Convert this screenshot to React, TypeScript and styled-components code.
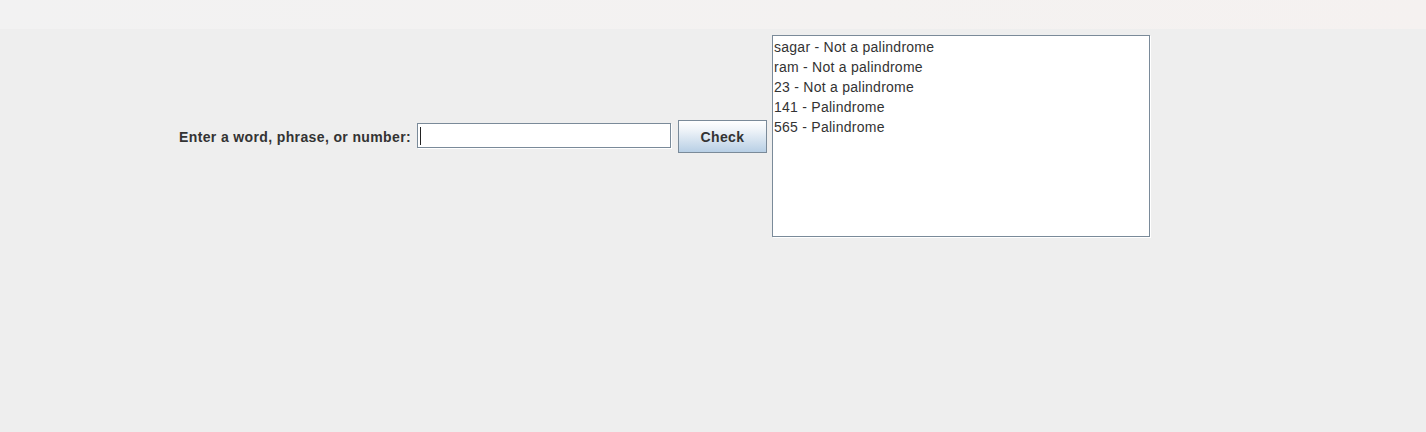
import React from "react";
import styled, { createGlobalStyle } from "styled-components";

const GlobalStyle = createGlobalStyle`
  html, body {
    margin: 0;
    padding: 0;
    background: #eeeeee;
    font-family: "Liberation Sans", Arial, sans-serif;
  }
`;

const Window = styled.div`
  width: 1426px;
  height: 432px;
  display: flex;
  flex-direction: column;
  background: #eeeeee;
`;

const TitleBar = styled.div`
  height: 29px;
  background: linear-gradient(to right, #f2f2f2, #f4f2f1 60%, #f5f1f0);
`;

const Content = styled.div`
  display: flex;
  align-items: center;
  padding: 5px 0 0 179px;
  height: 203px;
`;

const Label = styled.label`
  font-size: 14px;
  font-weight: bold;
  letter-spacing: 0.37px;
  color: #333333;
  margin-right: 6px;
  padding-top: 2px;
  white-space: nowrap;
`;

const Field = styled.div`
  width: 250px;
  height: 23px;
  border: 1px solid #7a8a99;
  box-shadow: 1px 1px 0 #ffffff;
  background: #ffffff;
  margin-right: 7px;
  display: flex;
  align-items: center;
  padding-left: 2px;
  box-sizing: content-box;
`;

const Caret = styled.span`
  width: 1px;
  height: 18px;
  background: #222222;
`;

const Button = styled.button`
  box-sizing: border-box;
  width: 89px;
  height: 33px;
  border: 1px solid #7a8a99;
  background: linear-gradient(to bottom, #ffffff 0%, #eef3f8 30%, #b8cfe5 100%);
  font-family: "Liberation Sans", Arial, sans-serif;
  font-size: 14px;
  font-weight: bold;
  letter-spacing: 0.35px;
  color: #333333;
  padding: 2px 0 0;
  margin-right: 5px;
  margin-top: 1px;
`;

const ResultArea = styled.div`
  width: 375px;
  height: 199px;
  background: #ffffff;
  border: 1px solid #7a8a99;
  box-shadow: 1px 1px 0 #ffffff;
  padding: 1px 0 0 1px;
  font-size: 14px;
  letter-spacing: 0.26px;
  color: #333333;
  line-height: 20px;
`;

const Line = styled.div`
  white-space: nowrap;
`;

const results = [
  "sagar - Not a palindrome",
  "ram - Not a palindrome",
  "23 - Not a palindrome",
  "141 - Palindrome",
  "565 - Palindrome",
];

const App = () => {
  return (
    <Window>
      <GlobalStyle />
      <TitleBar />
      <Content>
        <Label>Enter a word, phrase, or number:</Label>
        <Field>
          <Caret />
        </Field>
        <Button>Check</Button>
        <ResultArea>
          {results.map((r) => (
            <Line key={r}>{r}</Line>
          ))}
        </ResultArea>
      </Content>
    </Window>
  );
};

export default App;
